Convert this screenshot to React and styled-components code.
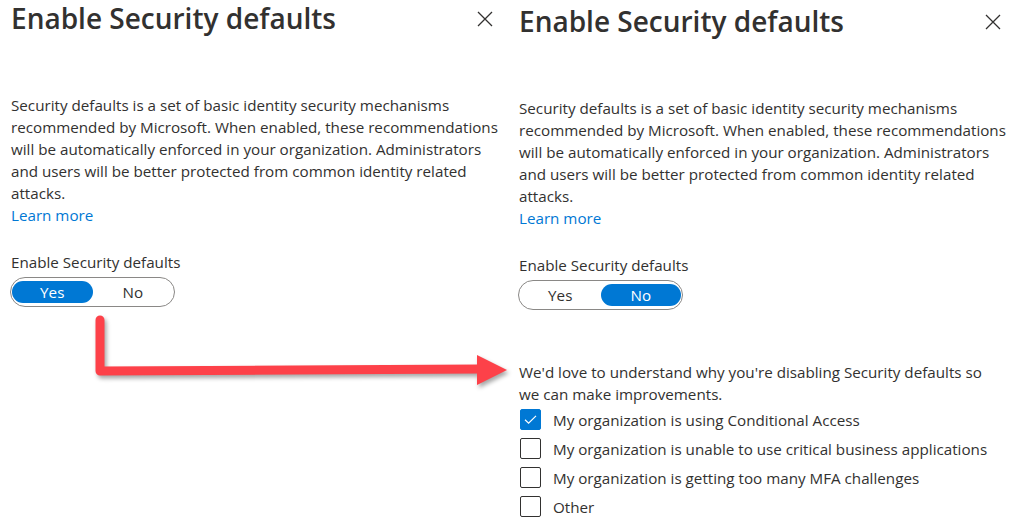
import { styled, createGlobalStyle } from "styled-components";

const GlobalStyle = createGlobalStyle`
    body {
        margin: 0;
        background: #ffffff;
        font-family: "Open Sans", "Noto Sans", sans-serif;
        color: #323130;
    }
`

const Page = styled.div`
    position: relative;
    display: flex;
    width: 1021px;
    height: 529px;
    overflow: hidden;
`

const Panel = styled.section`
    width: 508px;
    box-sizing: border-box;
    padding: ${props => props.$top || 0}px 0 0 11px;
    display: flex;
    flex-direction: column;
    align-items: flex-start;
`

const Header = styled.div`
    width: 482px;
    display: flex;
    justify-content: space-between;
    align-items: flex-start;
`

const Title = styled.h2`
    margin: 0;
    font-size: 28px;
    font-weight: 600;
    line-height: 36px;
    color: #323130;
`

const Close = styled.button`
    border: none;
    background: none;
    padding: 0;
    margin-top: 11px;
    width: 16px;
    height: 16px;
    display: flex;
    cursor: pointer;
`

const Text = styled.p`
    margin: ${props => props.margin || "0"};
    max-width: ${props => props.$max || 497}px;
    font-size: 15.2px;
    line-height: 22px;
`

const Link = styled.a`
    display: block;
    color: #0078d4;
    font-size: 15.2px;
    line-height: 22px;
    text-decoration: none;
`

const Label = styled.div`
    margin-top: 25px;
    font-size: 15.2px;
    line-height: 22px;
`

const Toggle = styled.div`
    margin: 4px 0 0 -1px;
    width: 165px;
    height: 30px;
    box-sizing: border-box;
    border: solid 1px #8a8886;
    border-radius: 15px;
    padding: 3px 1px;
    display: flex;
`

const Option = styled.div`
    flex: 1;
    height: 22px;
    border-radius: 11px;
    display: flex;
    align-items: center;
    justify-content: center;
    font-size: 15.2px;
    background-color: ${props => props.$on ? "#0078d4" : "transparent"};
    color: ${props => props.$on ? "#ffffff" : "#323130"};
`

const Reasons = styled.div`
    display: flex;
    flex-direction: column;
`

const Row = styled.label`
    height: 29px;
    display: flex;
    align-items: center;
    gap: 12px;
    font-size: 15.2px;
    padding-left: 1px;
`

const Box = styled.span`
    width: 21px;
    height: 21px;
    box-sizing: border-box;
    border-radius: 2px;
    border: solid 1px ${props => props.$checked ? "#0078d4" : "#323130"};
    background-color: ${props => props.$checked ? "#0078d4" : "#ffffff"};
    display: flex;
    align-items: center;
    justify-content: center;
`

const Arrow = styled.svg`
    position: absolute;
    left: 0;
    top: 0;
    pointer-events: none;
    filter: drop-shadow(2px 3px 2px rgba(0, 0, 0, 0.35));
`

const XIcon = () => (
    <svg width="16" height="16" viewBox="0 0 16 16">
        <path d="M1 1 L15 15 M15 1 L1 15" stroke="#323130" strokeWidth="1.3" fill="none" />
    </svg>
)

const CheckIcon = () => (
    <svg width="15" height="15" viewBox="0 0 15 15">
        <path d="M2 7.8 L5.6 11.2 L13 3.8" stroke="#ffffff" strokeWidth="1.2" fill="none" />
    </svg>
)

const reasons = [
    { text: "My organization is using Conditional Access", checked: true },
    { text: "My organization is unable to use critical business applications" },
    { text: "My organization is getting too many MFA challenges" },
    { text: "Other" },
]

const Intro = ({ enabled }) => (
    <>
        <Header>
            <Title>Enable Security defaults</Title>
            <Close aria-label="Close"><XIcon /></Close>
        </Header>
        <Text margin={"58px 0 0 0"}>
            Security defaults is a set of basic identity security mechanisms recommended by Microsoft. When enabled, these recommendations will be automatically enforced in your organization. Administrators and users will be better protected from common identity related attacks.
        </Text>
        <Link href="#">Learn more</Link>
        <Label>Enable Security defaults</Label>
        <Toggle>
            <Option $on={enabled}>Yes</Option>
            <Option $on={!enabled}>No</Option>
        </Toggle>
    </>
)

const App = () => {
    return (
        <Page>
            <GlobalStyle />
            <Panel>
                <Intro enabled={true} />
            </Panel>
            <Panel $top={3}>
                <Intro enabled={false} />
                <Text margin={"51px 0 0 0"} $max={485}>
                    We'd love to understand why you're disabling Security defaults so we can make improvements.
                </Text>
                <Reasons>
                    {reasons.map(r => (
                        <Row key={r.text}>
                            <Box $checked={r.checked}>{r.checked && <CheckIcon />}</Box>
                            {r.text}
                        </Row>
                    ))}
                </Reasons>
            </Panel>
            <Arrow width="1021" height="529" viewBox="0 0 1021 529">
                <path d="M100 320 L100 371 L480 369" stroke="#fd4149" strokeWidth="9" fill="none" strokeLinecap="round" strokeLinejoin="round" />
                <polygon points="477,355 507,370 477,385" fill="#fd4149" />
            </Arrow>
        </Page>
    )
}

export default App;
